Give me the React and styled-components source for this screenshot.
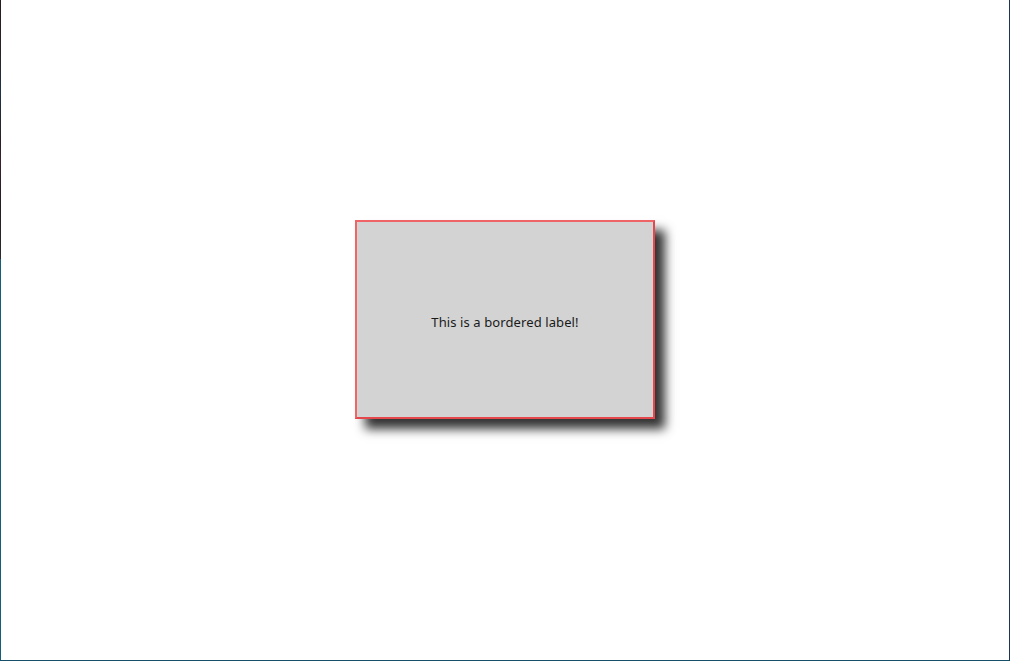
import React from "react";
import styled, { createGlobalStyle } from "styled-components";

const GlobalStyle = createGlobalStyle`
  html, body {
    margin: 0;
    padding: 0;
    background: #ffffff;
  }
`;

const Window = styled.div`
  box-sizing: border-box;
  width: 1010px;
  height: 661px;
  position: relative;
  background: #ffffff;
  border-right: 1px solid #1f3556;
  border-bottom: 1px solid #164f6a;
  border-left: 1px solid #175d78;
  padding-top: 220px;
  display: flex;
  justify-content: center;
  align-items: flex-start;
  font-family: "Noto Sans", "Open Sans", sans-serif;

  &::before {
    content: "";
    position: absolute;
    left: -1px;
    top: 0;
    width: 1px;
    height: 259px;
    background: linear-gradient(
      #241c1e 0%,
      #2a2226 20%,
      #1e3348 35%,
      #2a1f25 55%,
      #3b2030 62%,
      #231d22 80%,
      #2c2a2e 100%
    );
  }
`;

const BorderedLabel = styled.div`
  box-sizing: border-box;
  width: 300px;
  height: 199px;
  display: flex;
  align-items: center;
  justify-content: center;
  background: #d3d3d3;
  border: 2px solid #ee6467;
  border-right-color: #e4484c;
  border-bottom-color: #e4484c;
  box-shadow: 10px 10px 10px rgba(0, 0, 0, 0.8);
  color: #1a1a1a;
  font-size: 13px;
  letter-spacing: 0.1px;
  padding-top: 4px;
`;

export default function App() {
  return (
    <>
      <GlobalStyle />
      <Window>
        <BorderedLabel>This is a bordered label!</BorderedLabel>
      </Window>
    </>
  );
}
